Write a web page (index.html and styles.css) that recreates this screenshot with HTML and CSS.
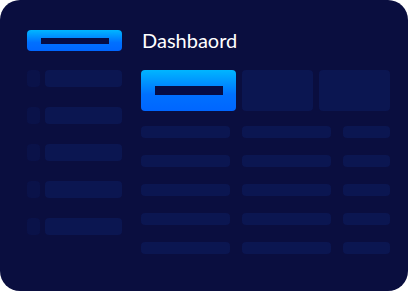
FILE: index.html
```html
<!DOCTYPE html>
<html>
<head>
<meta charset="utf-8">
<link rel="stylesheet" href="styles.css">
</head>
<body>
<div class="frame">
  <aside class="sidebar">
    <div class="side-btn"><span class="inner"></span></div>
    <div class="side-row"><span class="sq"></span><span class="bar"></span></div>
    <div class="side-row"><span class="sq"></span><span class="bar"></span></div>
    <div class="side-row"><span class="sq"></span><span class="bar"></span></div>
    <div class="side-row"><span class="sq"></span><span class="bar"></span></div>
    <div class="side-row"><span class="sq"></span><span class="bar"></span></div>
  </aside>
  <main class="main">
    <h1 class="title">Dashbaord</h1>
    <div class="cards">
      <div class="card active"><span class="inner"></span></div>
      <div class="card"></div>
      <div class="card"></div>
    </div>
    <div class="table">
      <span class="cell"></span><span class="cell"></span><span class="cell"></span>
      <span class="cell"></span><span class="cell"></span><span class="cell"></span>
      <span class="cell"></span><span class="cell"></span><span class="cell"></span>
      <span class="cell"></span><span class="cell"></span><span class="cell"></span>
      <span class="cell"></span><span class="cell"></span><span class="cell"></span>
    </div>
  </main>
</div>
</body>
</html>
```
FILE: styles.css
```css
* { box-sizing: border-box; }
html, body { margin: 0; padding: 0; background: #ffffff; }
.frame {
  width: 408px;
  height: 291px;
  background: #0a0e3f;
  border-radius: 20px;
  padding: 30px 18px 0 27px;
  display: flex;
  gap: 19px;
  font-family: Lato, "Liberation Sans", sans-serif;
}
.sidebar {
  width: 95px;
  display: flex;
  flex-direction: column;
  gap: 20px;
}
.side-btn {
  height: 21px;
  border-radius: 4px;
  background: linear-gradient(180deg, #00b6ff 0%, #0070ff 60%, #0066ff 100%);
  display: flex;
  align-items: center;
  justify-content: center;
  margin-bottom: -1px;
}
.side-btn .inner {
  width: 68px;
  height: 6px;
  background: #060c45;
}
.side-row {
  display: flex;
  gap: 5px;
  height: 17px;
}
.side-row .sq {
  width: 13px;
  border-radius: 4px;
  background: #0a1249;
}
.side-row .bar {
  flex: 1;
  border-radius: 4px;
  background: #0b1651;
}
.main {
  width: 249px;
  display: flex;
  flex-direction: column;
}
.title {
  margin: 0;
  height: 21px;
  line-height: 21px;
  font-size: 20px;
  font-weight: 400;
  color: #ffffff;
  padding-left: 1px;
}
.cards {
  margin-top: 19px;
  display: grid;
  grid-template-columns: 95px 71px 71px;
  gap: 6px;
  height: 41px;
}
.card {
  border-radius: 4px;
  background: #0b1651;
}
.card.active {
  background: linear-gradient(180deg, #00b6ff 0%, #0070ff 60%, #0066ff 100%);
  display: flex;
  align-items: center;
  justify-content: center;
}
.card.active .inner {
  width: 68px;
  height: 9px;
  background: #060c45;
}
.table {
  margin-top: 15px;
  display: grid;
  grid-template-columns: 89px 89px 47px;
  column-gap: 12px;
  row-gap: 17px;
  grid-auto-rows: 12px;
}
.cell {
  border-radius: 4px;
  background: #0b1651;
}
```
